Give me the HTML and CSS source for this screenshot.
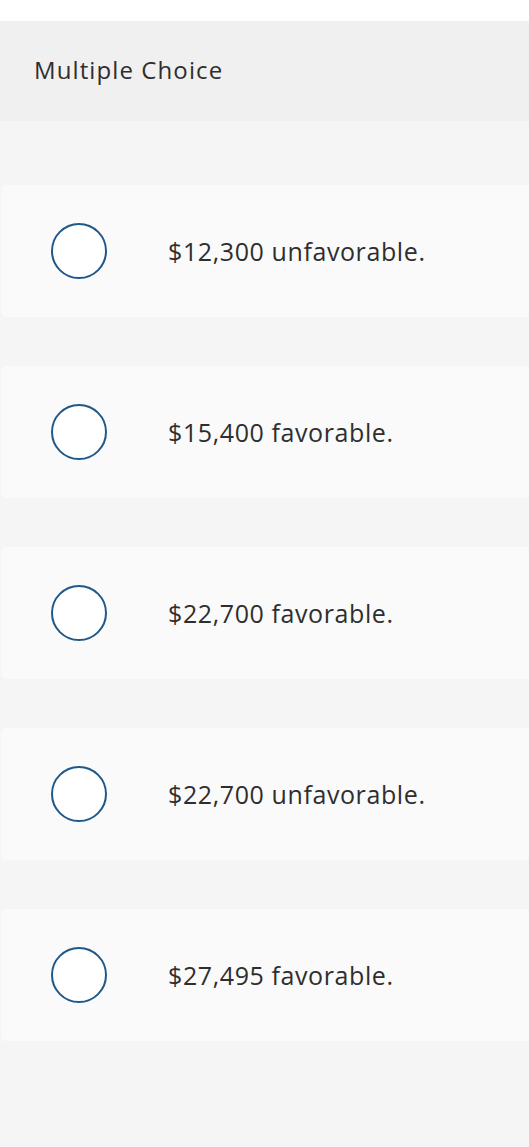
FILE: index.html
```html
<!DOCTYPE html>
<html>
<head>
<meta charset="utf-8">
<link rel="stylesheet" href="styles.css">
</head>
<body>
<div class="page">
  <div class="header">Multiple Choice</div>
  <div class="choices">
    <div class="choice"><span class="radio"></span><span class="label">$12,300 unfavorable.</span></div>
    <div class="choice"><span class="radio"></span><span class="label">$15,400 favorable.</span></div>
    <div class="choice"><span class="radio"></span><span class="label">$22,700 favorable.</span></div>
    <div class="choice"><span class="radio"></span><span class="label">$22,700 unfavorable.</span></div>
    <div class="choice"><span class="radio"></span><span class="label">$27,495 favorable.</span></div>
  </div>
</div>
</body>
</html>
```
FILE: styles.css
```css
html, body {
  margin: 0;
  padding: 0;
  background: #f5f5f5;
}
.page {
  font-family: "Open Sans", Lato, sans-serif;
  color: #2e2e2e;
  min-height: 1147px;
  background: #f5f5f5;
  border-top: 21px solid #ffffff;
}
.header {
  height: 100px;
  background: #f0f0f0;
  display: flex;
  align-items: center;
  padding-left: 34px;
  padding-bottom: 3px;
  font-size: 24px;
  letter-spacing: 1.1px;
  box-sizing: border-box;
}
.choices {
  display: flex;
  flex-direction: column;
  gap: 49px;
  padding: 64px 0 0 1px;
}
.choice {
  height: 132px;
  background: #fafafa;
  border-radius: 5px 0 0 5px;
  display: flex;
  align-items: center;
  padding-left: 50px;
}
.radio {
  width: 56px;
  height: 56px;
  box-sizing: border-box;
  border: 2px solid #1f5889;
  border-radius: 50%;
  background: #ffffff;
  flex: none;
}
.label {
  margin-left: 61px;
  font-size: 25px;
  letter-spacing: 0.6px;
}
```
